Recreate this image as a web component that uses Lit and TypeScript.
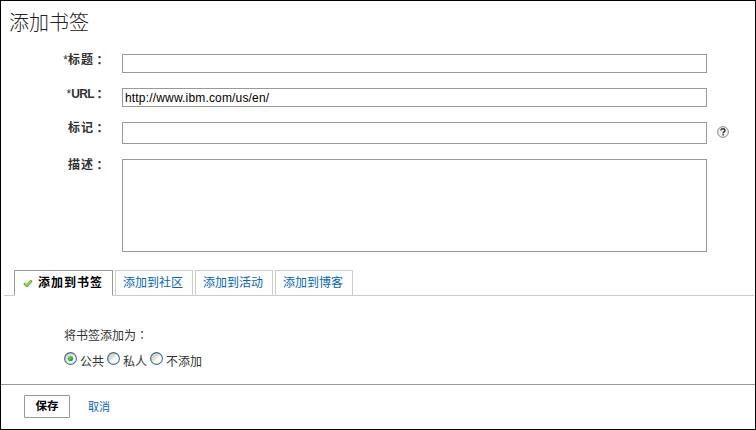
import { LitElement, html, css, svg } from "lit";
import { customElement, state } from "lit/decorators.js";

const fonts = css`"Liberation Sans", "Noto Sans CJK SC", sans-serif`;

@customElement("option-radio")
class OptionRadio extends LitElement {
  static properties = { checked: { type: Boolean } };
  declare checked: boolean;
  static styles = css`
    :host { display: block; width: 13px; height: 13px; }
    svg { display: block; }
  `;
  render() {
    return html`<svg width="13" height="13" viewBox="0 0 13 13">
      <defs>
        <linearGradient id="face" x1="0" y1="0" x2="1" y2="1">
          <stop offset="0" stop-color="#c8c7bc" />
          <stop offset=".42" stop-color="#e2e1d6" />
          <stop offset=".56" stop-color="#fff" />
        </linearGradient>
        <radialGradient id="dot" cx=".35" cy=".35" r=".7">
          <stop offset="0" stop-color="#60d860" />
          <stop offset="1" stop-color="#1c9a1c" />
        </radialGradient>
      </defs>
      <circle cx="6.5" cy="6.5" r="5.9" fill="url(#face)" stroke="#41718f" stroke-width="1.15" />
      ${this.checked ? svg`<circle cx="6.5" cy="6.5" r="2.6" fill="url(#dot)" />` : null}
    </svg>`;
  }
}

@customElement("app-root")
class AppRoot extends LitElement {
  @state() tab = 0;
  @state() choice = 0;

  static styles = css`
    * { box-sizing: border-box; }
    :host {
      display: flex; flex-direction: column; box-sizing: border-box;
      width: 756px; height: 430px; border: 1px solid #000; background: #fff;
      font: 12px/16px ${fonts}; color: #333; overflow: hidden;
    }
    h1 { margin: 8px 0 0 8px; font-size: 20px; line-height: 28px; font-weight: 300; color: #222; height: 45px; }
    .form { display: grid; grid-template-columns: 106px 585px 1fr; column-gap: 15px; row-gap: 15px; height: 198px; align-items: start; align-content: start; }
    .label { display: flex; justify-content: flex-end; font-weight: bold; height: 16px; margin-top: -2px; white-space: nowrap; }
    .label .cn, .active .cn { letter-spacing: 1px; }
    .latin { letter-spacing: -0.6px; }
    .star { font-weight: normal; }
    .colon { font-family: "Noto Sans CJK TC", sans-serif; width: 13px; margin-left: -1px; margin-right: 1px; text-align: center; }
    .plain-colon { font-family: "Noto Sans CJK TC", sans-serif; }
    .field { display: block; width: 585px; height: 19px; margin: 0; padding: 1px 2px; border: 1px solid #999; border-radius: 0; background: #fff; color: #000; font: 12px/15px ${fonts}; letter-spacing: 0.17px; outline: none; resize: none; }
    .tags { height: 22px; }
    .notes { height: 93px; }
    .help { display: block; margin: 4px 0 0 -5px; }
    .tabs { display: flex; gap: 2px; margin: 18px 1px 0 3px; padding-left: 10px; height: 26px; border-bottom: 1px solid #ccc; flex: none; }
    .tab { width: 78px; height: 26px; border: 1px solid #ccc; padding-left: 7px; line-height: 24px; color: #06c; white-space: nowrap; }
    .active { width: 99px; padding-left: 0; border-color: #999; border-bottom-color: #fff; color: #000; font-weight: bold; display: flex; align-items: center; }
    .check { margin: 1px 5px 0 8px; flex: none; }
    .panel { padding: 31px 0 0 63px; height: 88px; flex: none; }
    .options { display: flex; align-items: center; margin-top: 7px; height: 20px; }
    .option { display: flex; align-items: center; }
    .text { margin: 1px 3px 0 3px; }
    .option option-radio { margin-top: -5px; }
    .actions { display: flex; gap: 18px; align-items: flex-start; border-top: 1px solid #999; padding: 10px 0 0 23px; flex: 1; }
    .save { width: 46px; height: 23px; border: 1px solid #999; border-radius: 1px; background: #fff; font: bold 11.5px/21px ${fonts}; color: #000; padding: 0; }
    .cancel { color: #06c; font-size: 11px; line-height: 24px; }
  `;

  label(text: string, required = false) {
    return html`<div class="label">${required ? html`<span class="star">*</span>` : null}<span class=${/^[A-Z]/.test(text) ? "latin" : "cn"}>${text}</span><span class="colon">：</span></div>`;
  }

  render() {
    return html`
      <h1>添加书签</h1>
      <div class="form">
        ${this.label("标题", true)}<input class="field" /><span></span>
        ${this.label("URL", true)}<input class="field" .value=${"http://www.ibm.com/us/en/"} /><span></span>
        ${this.label("标记")}<input class="field tags" />
        <svg class="help" width="12" height="12" viewBox="0 0 12 12">
          <circle cx="6" cy="6" r="5.4" fill="#f0f0f0" stroke="#8a8a8a" />
          <path d="M4 4.5V4Q4.2 2.7 6 2.7T8 4.4Q8 5.2 7 5.8T6.2 7.3" fill="none" stroke="#333" stroke-width="1.5" />
          <path d="M5.4 8.2h1.6v1.4H5.4z" fill="#333" />
        </svg>
        ${this.label("描述")}<textarea class="field notes"></textarea><span></span>
      </div>
      <div class="tabs">
        ${["添加到书签", "添加到社区", "添加到活动", "添加到博客"].map(
          (name, i) => html`<div class="tab ${i === this.tab ? "active" : ""}" @click=${() => (this.tab = i)}>
            ${i === this.tab
              ? html`<svg class="check" width="10" height="9" viewBox="0 0 10 9">
                  <path d="M2 5 3.9 6.8 8 2.2" fill="none" stroke="#5fb035" stroke-width="2.8" stroke-linejoin="round" stroke-linecap="round" />
                  <path d="M2.2 4.8 3.9 6.2 7.8 2.1" fill="none" stroke="#a5df6c" stroke-width="1.2" stroke-linecap="round" />
                </svg>`
              : null}<span class="cn">${name}</span>
          </div>`
        )}
      </div>
      <div class="panel">
        <div>将书签添加为<span class="plain-colon">：</span></div>
        <div class="options">
          ${["公共", "私人", "不添加"].map(
            (name, i) => html`<div class="option" @click=${() => (this.choice = i)}>
              <option-radio ?checked=${i === this.choice}></option-radio><span class="text">${name}</span>
            </div>`
          )}
        </div>
      </div>
      <div class="actions"><button class="save">保存</button><span class="cancel">取消</span></div>
    `;
  }
}
